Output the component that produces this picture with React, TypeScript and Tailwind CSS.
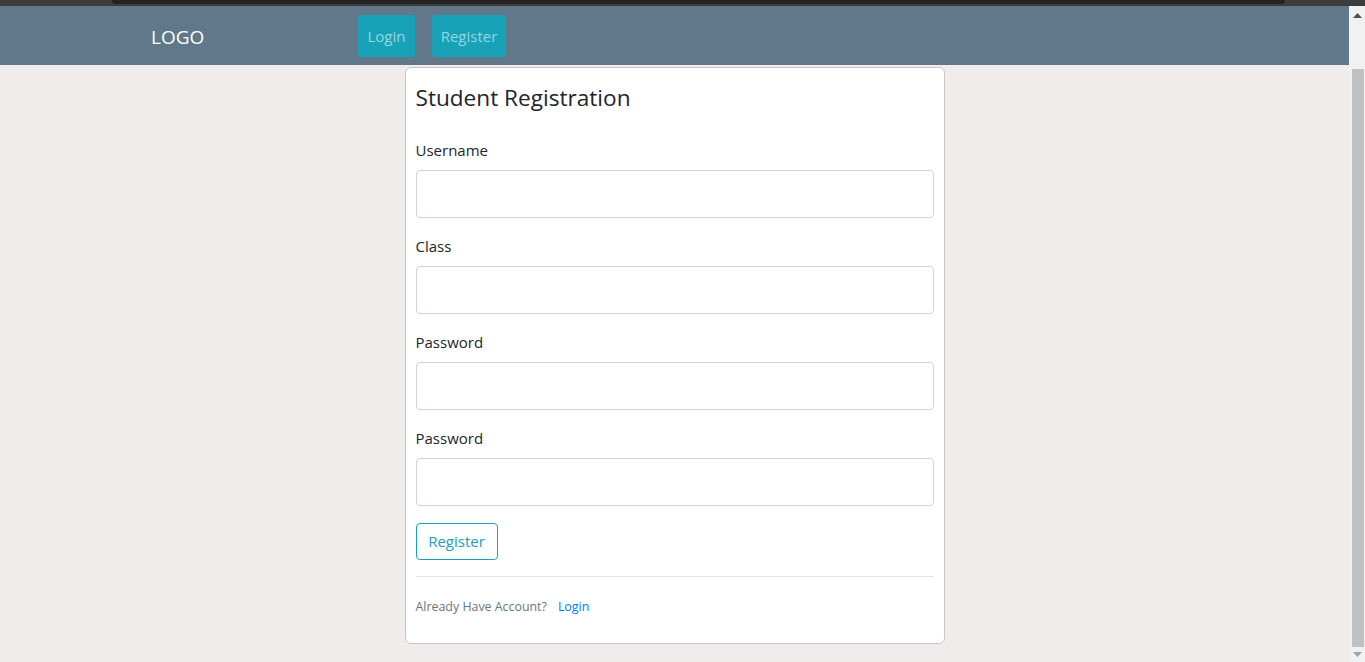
import React from "react";

const font = { fontFamily: '"Open Sans", "Noto Sans", sans-serif' };

function Field({ label }: { label: string }) {
  return (
    <div className="mb-4">
      <label className="block text-[15px] leading-[24px] text-[#212529] mb-2">{label}</label>
      <div className="h-[48px] w-full rounded-[4px] border border-[#ced4da] bg-white" />
    </div>
  );
}

export default function App() {
  return (
    <div className="h-[662px] w-full overflow-hidden flex flex-col bg-[#efeceb]" style={font}>
      <div className="h-[6px] bg-[#3c3c3c] flex shrink-0">
        <div className="ml-[112px] mr-[80px] flex-1 h-[4px] bg-[#232323] rounded-b-[4px]" />
      </div>
      <div className="flex flex-1 min-h-0">
        <div className="flex-1 flex flex-col">
          <nav className="h-[59px] bg-[#61788a] flex items-center shrink-0">
            <div className="pl-[151px] pt-[3px] w-[358px] text-white text-[19px] leading-none">LOGO</div>
            <div className="flex gap-[17px]">
              <button className="h-[42px] w-[57px] pt-[2px] rounded-[3px] bg-[#17a2b8] text-[#95d6e2] text-[15px]">Login</button>
              <button className="h-[42px] w-[74px] pt-[2px] rounded-[3px] bg-[#17a2b8] text-[#95d6e2] text-[15px]">Register</button>
            </div>
          </nav>
          <div className="flex justify-center pt-[2px]">
            <div className="w-[540px] bg-white border border-[#c9c5c4] rounded-[6px] px-[10px] pt-[15px] pb-[11px]">
              <h4 className="text-[22.6px] leading-[29px] text-[#212529] mb-[26px]">Student Registration</h4>
              <Field label="Username" />
              <Field label="Class" />
              <Field label="Password" />
              <Field label="Password" />
              <button className="mt-[1px] h-[37px] w-[82px] pb-[1px] rounded-[4px] border border-[#17a2b8] text-[#17a2b8] text-[15px] leading-[24px] bg-white">Register</button>
              <div className="mt-4 mb-4 border-t border-[#e5e5e5]" />
              <p className="pt-[4px] text-[12.4px] leading-[19px] mb-4 text-[#6c757d]">
                Already Have Account?<span className="ml-[11px] text-[#007bff]">Login</span>
              </p>
            </div>
          </div>
        </div>
        <div className="w-[16px] bg-[#f1f1f1] flex flex-col items-center shrink-0">
          <div className="h-[63px] w-full flex justify-center pt-[7px]">
            <svg width="9" height="5" viewBox="0 0 9 5"><polygon points="0,5 9,5 4.5,0" fill="#505050" /></svg>
          </div>
          <div className="flex-1 w-[12px] ml-[1px] bg-[#c1c1c1]" />
          <div className="h-[15px] w-full flex justify-center pt-[5px]">
            <svg width="9" height="5" viewBox="0 0 9 5"><polygon points="0,0 9,0 4.5,5" fill="#a3a3a3" /></svg>
          </div>
        </div>
      </div>
    </div>
  );
}
